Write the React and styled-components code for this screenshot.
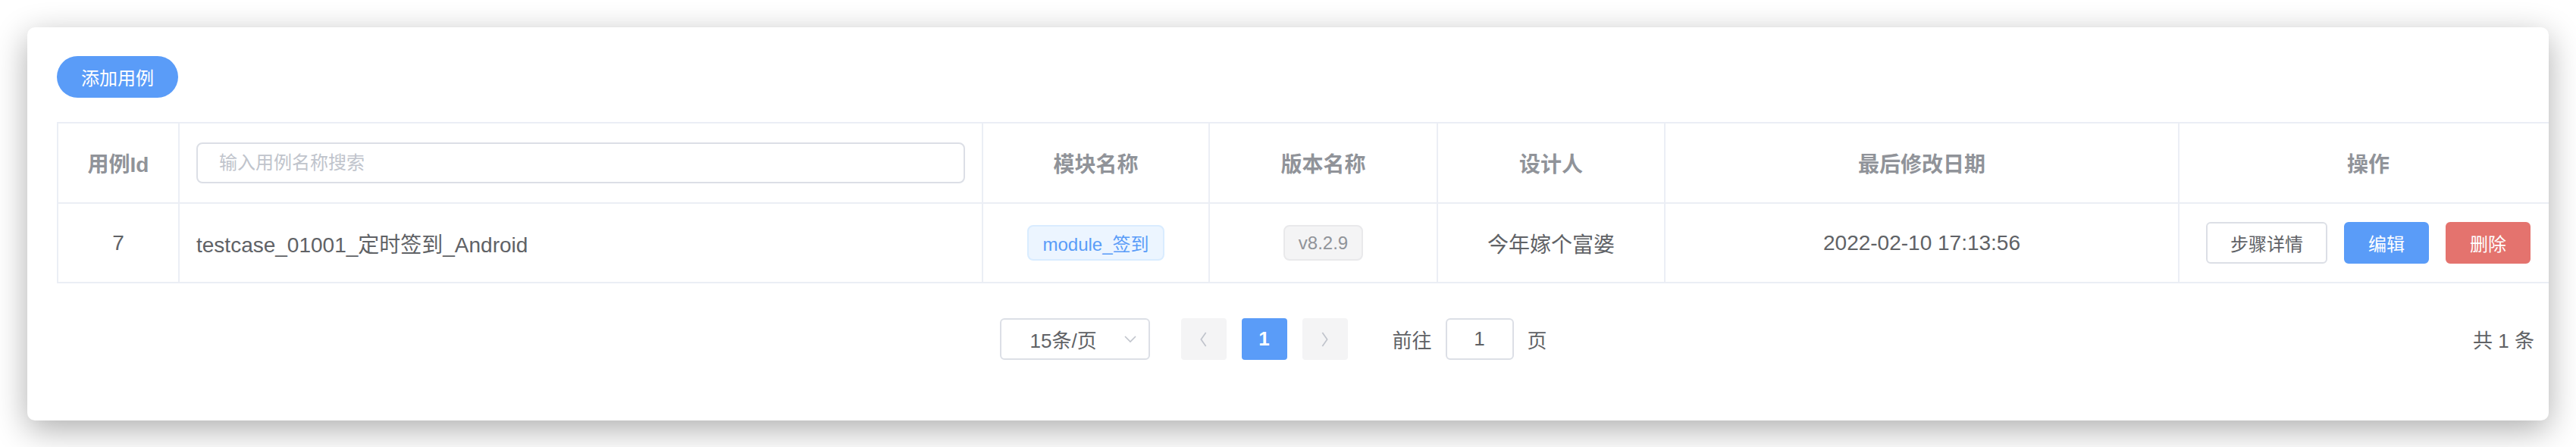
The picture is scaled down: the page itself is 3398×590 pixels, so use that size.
import React from 'react';
import styled, { createGlobalStyle } from 'styled-components';

const GlobalStyle = createGlobalStyle`
  html, body {
    margin: 0;
    padding: 0;
    background: #ffffff;
  }
  body {
    font-family: 'Liberation Sans', 'Noto Sans CJK SC', sans-serif;
    color: #606266;
  }
`;

const Page = styled.div`
  padding: 36px;
`;

const Card = styled.div`
  width: 3326px;
  box-sizing: border-box;
  padding: 38px 19px 80px 39px;
  background: #fff;
  border-radius: 10px;
  box-shadow: 0 12px 44px rgba(0, 0, 0, 0.32);
  overflow: hidden;
`;

const Toolbar = styled.div`
  display: flex;
  margin-bottom: 32px;
`;

const RoundButton = styled.button`
  height: 55px;
  padding: 0 32px;
  border: none;
  border-radius: 28px;
  background: #5a9cf8;
  color: #fff;
  font-family: inherit;
  font-size: 24px;
`;

const Table = styled.table`
  width: 3298px;
  table-layout: fixed;
  border-collapse: collapse;
  flex-shrink: 0;
  font-size: 28px;
  td, th {
    border: 2px solid #ebeef5;
    padding: 0 22px;
    box-sizing: border-box;
  }
`;

const HeadCell = styled.th`
  height: 106px;
  color: #909399;
  font-weight: 600;
  text-align: ${(p) => p.$align || 'center'};
`;

const Cell = styled.td`
  height: 105px;
  color: #606266;
  text-align: ${(p) => p.$align || 'center'};
`;

const SearchInput = styled.input`
  display: block;
  width: 100%;
  height: 54px;
  box-sizing: border-box;
  padding: 0 28px;
  border: 2px solid #dcdfe6;
  border-radius: 8px;
  font-family: inherit;
  font-size: 24px;
  outline: none;
  &::placeholder {
    color: #c0c4cc;
  }
`;

const Tag = styled.span`
  display: inline-flex;
  align-items: center;
  height: 47px;
  box-sizing: border-box;
  padding: 0 18px;
  border-radius: 8px;
  font-size: 24px;
  border: 2px solid ${(p) => (p.$info ? '#e9e9eb' : '#d9ecff')};
  background: ${(p) => (p.$info ? '#f4f4f5' : '#ecf5ff')};
  color: ${(p) => (p.$info ? '#909399' : '#5a9cf8')};
`;

const Actions = styled.div`
  display: flex;
  justify-content: center;
  gap: 22px;
`;

const ActionButton = styled.button`
  height: 55px;
  padding: 0 30px;
  border-radius: 6px;
  font-family: inherit;
  font-size: 24px;
  border: 2px solid
    ${(p) => (p.$kind === 'primary' ? '#5a9cf8' : p.$kind === 'danger' ? '#e4736e' : '#dcdfe6')};
  background: ${(p) => (p.$kind === 'primary' ? '#5a9cf8' : p.$kind === 'danger' ? '#e4736e' : '#fff')};
  color: ${(p) => (p.$kind ? '#fff' : '#606266')};
`;

const Pagination = styled.div`
  display: flex;
  align-items: center;
  margin-top: 46px;
  padding-left: 22px;
  font-size: 26px;
  color: #606266;
`;

const Spacer = styled.div`
  flex: 1;
`;

const Pager = styled.div`
  display: flex;
  align-items: center;
`;

const SizeSelect = styled.div`
  display: flex;
  align-items: center;
  justify-content: space-between;
  width: 198px;
  height: 55px;
  box-sizing: border-box;
  padding: 0 16px 0 38px;
  border: 2px solid #dcdfe6;
  border-radius: 6px;
  margin-right: 41px;
`;

const PageBtn = styled.div`
  display: flex;
  align-items: center;
  justify-content: center;
  width: 60px;
  height: 55px;
  margin-right: 20px;
  border-radius: 4px;
  background: ${(p) => (p.$active ? '#5a9cf8' : '#f4f4f5')};
  color: ${(p) => (p.$active ? '#fff' : '#c0c4cc')};
  font-weight: bold;
  font-size: 26px;
`;

const Jumper = styled.div`
  display: flex;
  align-items: center;
  gap: 18px;
  margin-left: 39px;
`;

const JumpInput = styled.div`
  display: flex;
  align-items: center;
  justify-content: center;
  width: 90px;
  height: 55px;
  box-sizing: border-box;
  border: 2px solid #dcdfe6;
  border-radius: 6px;
`;

const Total = styled.span`
  font-size: 26px;
  color: #606266;
`;

const Chevron = ({ dir }) => {
  const d = {
    left: 'M8 1 L2 9.5 L8 18',
    right: 'M2 1 L8 9.5 L2 18',
    down: 'M1 2 L8 9 L15 2',
  }[dir];
  const box = dir === 'down' ? '0 0 16 11' : '0 0 10 19';
  const size = dir === 'down' ? { width: 16, height: 11 } : { width: 11, height: 20 };
  return (
    <svg viewBox={box} {...size} fill="none" stroke="#c0c4cc" strokeWidth="1.6">
      <path d={d} />
    </svg>
  );
};

const App = () => (
  <Page>
    <GlobalStyle />
    <Card>
      <Toolbar>
        <RoundButton>添加用例</RoundButton>
      </Toolbar>
      <Table>
        <colgroup>
          <col style={{ width: 160 }} />
          <col style={{ width: 1060 }} />
          <col style={{ width: 299 }} />
          <col style={{ width: 301 }} />
          <col style={{ width: 300 }} />
          <col style={{ width: 678 }} />
          <col style={{ width: 500 }} />
        </colgroup>
        <thead>
          <tr>
            <HeadCell>用例Id</HeadCell>
            <HeadCell $align="left">
              <SearchInput placeholder="输入用例名称搜索" />
            </HeadCell>
            <HeadCell>模块名称</HeadCell>
            <HeadCell>版本名称</HeadCell>
            <HeadCell>设计人</HeadCell>
            <HeadCell>最后修改日期</HeadCell>
            <HeadCell>操作</HeadCell>
          </tr>
        </thead>
        <tbody>
          <tr>
            <Cell>7</Cell>
            <Cell $align="left">testcase_01001_定时签到_Android</Cell>
            <Cell>
              <Tag>module_签到</Tag>
            </Cell>
            <Cell>
              <Tag $info>v8.2.9</Tag>
            </Cell>
            <Cell>今年嫁个富婆</Cell>
            <Cell>2022-02-10 17:13:56</Cell>
            <Cell>
              <Actions>
                <ActionButton>步骤详情</ActionButton>
                <ActionButton $kind="primary">编辑</ActionButton>
                <ActionButton $kind="danger">删除</ActionButton>
              </Actions>
            </Cell>
          </tr>
        </tbody>
      </Table>
      <Pagination>
        <Spacer />
        <Pager>
          <SizeSelect>
            <span>15条/页</span>
            <Chevron dir="down" />
          </SizeSelect>
          <PageBtn>
            <Chevron dir="left" />
          </PageBtn>
          <PageBtn $active>1</PageBtn>
          <PageBtn>
            <Chevron dir="right" />
          </PageBtn>
          <Jumper>
            <span>前往</span>
            <JumpInput>1</JumpInput>
            <span>页</span>
          </Jumper>
        </Pager>
        <Spacer />
        <Total>共 1 条</Total>
      </Pagination>
    </Card>
  </Page>
);

export default App;
